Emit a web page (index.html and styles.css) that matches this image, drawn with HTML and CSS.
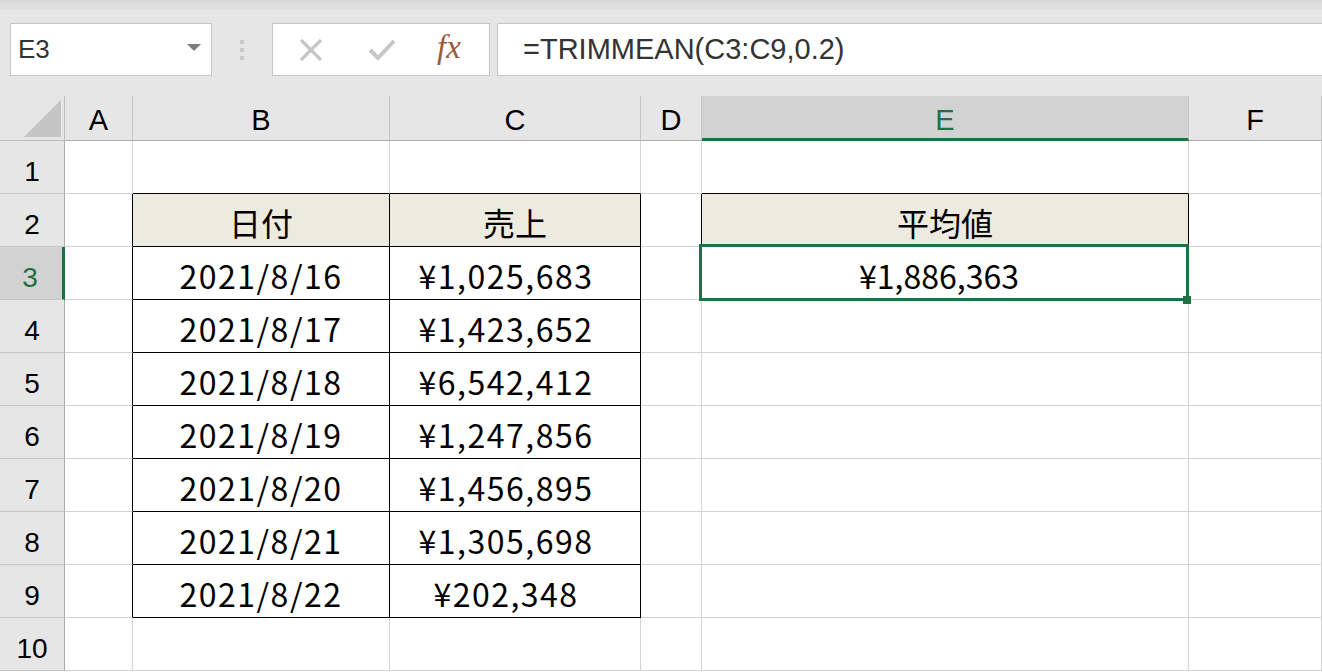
FILE: index.html
```html
<!DOCTYPE html>
<html lang="ja">
<head>
    <meta charset="UTF-8">
    <title>TRIMMEAN</title>
    <link rel="stylesheet" href="styles.css">
</head>
<body>
    <div class="topbar">
        <div class="namebox">
            <span>E3</span>
            <span class="caret"></span>
        </div>
        <div class="grip"><i></i><i></i><i></i></div>
        <div class="fxbtns">
            <svg class="ico" width="26" height="22" viewBox="0 0 26 22"><path d="M3 1 L23 21 M23 1 L3 21" stroke="#c6c6c6" stroke-width="3.2" fill="none"/></svg>
            <svg class="ico" width="28" height="22" viewBox="0 0 28 22"><path d="M2 11 L10 19 L26 2" stroke="#c6c6c6" stroke-width="4" fill="none"/></svg>
            <span class="fx">fx</span>
        </div>
        <div class="formula">=TRIMMEAN(C3:C9,0.2)</div>
    </div>

    <div class="sheet">
        <div class="corner"><span></span></div>
        <div class="ch">A</div>
        <div class="ch">B</div>
        <div class="ch">C</div>
        <div class="ch">D</div>
        <div class="ch sel">E</div>
        <div class="ch">F</div>

        <div class="rh">1</div>
        <div class="c"></div>
        <div class="c bb"></div>
        <div class="c bb"></div>
        <div class="c"></div>
        <div class="c bb"></div>
        <div class="c"></div>

        <div class="rh">2</div>
        <div class="c br"></div>
        <div class="c th">日付</div>
        <div class="c th">売上</div>
        <div class="c br"></div>
        <div class="c th">平均値</div>
        <div class="c"></div>

        <div class="rh sel">3</div>
        <div class="c br"></div>
        <div class="c td">2021/8/16</div>
        <div class="c td yen">¥1,025,683</div>
        <div class="c"></div>
        <div class="c active">¥1,886,363</div>
        <div class="c"></div>

        <div class="rh">4</div>
        <div class="c br"></div>
        <div class="c td">2021/8/17</div>
        <div class="c td yen">¥1,423,652</div>
        <div class="c"></div>
        <div class="c"></div>
        <div class="c"></div>

        <div class="rh">5</div>
        <div class="c br"></div>
        <div class="c td">2021/8/18</div>
        <div class="c td yen">¥6,542,412</div>
        <div class="c"></div>
        <div class="c"></div>
        <div class="c"></div>

        <div class="rh">6</div>
        <div class="c br"></div>
        <div class="c td">2021/8/19</div>
        <div class="c td yen">¥1,247,856</div>
        <div class="c"></div>
        <div class="c"></div>
        <div class="c"></div>

        <div class="rh">7</div>
        <div class="c br"></div>
        <div class="c td">2021/8/20</div>
        <div class="c td yen">¥1,456,895</div>
        <div class="c"></div>
        <div class="c"></div>
        <div class="c"></div>

        <div class="rh">8</div>
        <div class="c br"></div>
        <div class="c td">2021/8/21</div>
        <div class="c td yen">¥1,305,698</div>
        <div class="c"></div>
        <div class="c"></div>
        <div class="c"></div>

        <div class="rh">9</div>
        <div class="c br"></div>
        <div class="c td">2021/8/22</div>
        <div class="c td yen">¥202,348</div>
        <div class="c"></div>
        <div class="c"></div>
        <div class="c"></div>

        <div class="rh">10</div>
        <div class="c"></div>
        <div class="c"></div>
        <div class="c"></div>
        <div class="c"></div>
        <div class="c"></div>
        <div class="c"></div>
    </div>
</body>
</html>
```

FILE: styles.css
```css
body, html {
    margin: 0;
    padding: 0;
    background-color: #fff;
    font-family: "Noto Sans CJK JP", "Noto Sans", sans-serif;
    overflow: hidden;
}
.topbar {
    height: 96px;
    box-sizing: border-box;
    padding: 23px 0 0 10px;
    display: flex;
    align-items: flex-start;
    background: linear-gradient(#d9d9d9 0, #d9d9d9 3px, #dfdfdf 3px, #dfdfdf 10px, #e6e6e6 10px);
}
.namebox {
    width: 202px;
    height: 53px;
    box-sizing: border-box;
    border: 1px solid #c6c6c6;
    background-color: #fff;
    display: flex;
    align-items: center;
    justify-content: space-between;
    padding: 0 10px 0 7px;
    font-family: "Liberation Sans", sans-serif;
    font-size: 26px;
    color: #333;
}
.caret {
    width: 0;
    height: 0;
    border-left: 7px solid transparent;
    border-right: 7px solid transparent;
    border-top: 7px solid #7d7d7d;
    margin-top: -4px;
}
.grip {
    width: 60px;
    height: 53px;
    display: flex;
    flex-direction: column;
    align-items: center;
    justify-content: center;
    gap: 4px;
}
.grip i {
    display: block;
    width: 4px;
    height: 4px;
    background-color: #c8c8c8;
}
.fxbtns {
    width: 218px;
    height: 53px;
    box-sizing: border-box;
    border: 1px solid #c6c6c6;
    background-color: #fff;
    display: flex;
    align-items: center;
    padding-left: 25px;
    gap: 44px;
}
.fx {
    font-family: "Liberation Serif", "DejaVu Serif", serif;
    font-style: italic;
    font-size: 33px;
    color: #9c5a3c;
    margin-top: -4px;
    margin-left: -3px;
}
.formula {
    flex: 1;
    height: 53px;
    box-sizing: border-box;
    border: 1px solid #c6c6c6;
    border-right: none;
    background-color: #fff;
    margin-left: 7px;
    padding-left: 25px;
    display: flex;
    align-items: center;
    font-family: "Liberation Sans", sans-serif;
    font-size: 29px;
    color: #333;
}

.sheet {
    display: grid;
    grid-template-columns: 65px 68px 257px 251px 61px 487px 1fr;
    grid-template-rows: 45px repeat(10, 53px);
}
.sheet > div {
    box-sizing: border-box;
    display: flex;
    align-items: center;
    justify-content: center;
}
.corner {
    background-color: #e6e6e6;
    border-right: 1px solid #bcbcbc;
    border-bottom: 1px solid #bcbcbc;
    position: relative;
}
.corner span {
    position: absolute;
    right: 3px;
    bottom: 3px;
    width: 0;
    height: 0;
    border-left: 37px solid transparent;
    border-bottom: 37px solid #c4c4c4;
}
.ch {
    background-color: #e6e6e6;
    border-right: 1px solid #c6c6c6;
    border-bottom: 1px solid #ababab;
    font-family: "Liberation Sans", sans-serif;
    font-size: 29px;
    color: #000;
    padding-top: 4px;
}
.ch.sel {
    background-color: #d2d2d2;
    color: #1e7145;
    border-bottom: 3px solid #1e7145;
    padding-top: 6px;
}
.rh {
    background-color: #e6e6e6;
    border-right: 1px solid #ababab;
    border-bottom: 1px solid #c6c6c6;
    font-family: "Liberation Sans", sans-serif;
    font-size: 28px;
    color: #000;
    padding-top: 9px;
}
.rh.sel {
    background-color: #d2d2d2;
    color: #1e7145;
    border-right: 3px solid #1e7145;
    padding-right: 2px;
}
.c {
    border-right: 1px solid #d4d4d4;
    border-bottom: 1px solid #d4d4d4;
    font-size: 32px;
    color: #000;
    padding-top: 3px;
}
.bb {
    border-bottom-color: #000;
}
.br {
    border-right-color: #000;
}
.th {
    background-color: #edeae0;
    border-right-color: #000;
    border-bottom-color: #000;
}
.td {
    border-right-color: #000;
    border-bottom-color: #000;
    letter-spacing: 1.5px;
}
.yen {
    padding-right: 18px;
}
.active {
    position: relative;
    padding-right: 12px;
}
.active::after {
    content: "";
    position: absolute;
    top: -3px;
    left: -3px;
    right: -1px;
    bottom: -2px;
    border: 3px solid #1e7145;
}
.active::before {
    content: "";
    position: absolute;
    right: -3px;
    bottom: -5px;
    width: 8px;
    height: 8px;
    background-color: #1e7145;
    z-index: 1;
}
```
